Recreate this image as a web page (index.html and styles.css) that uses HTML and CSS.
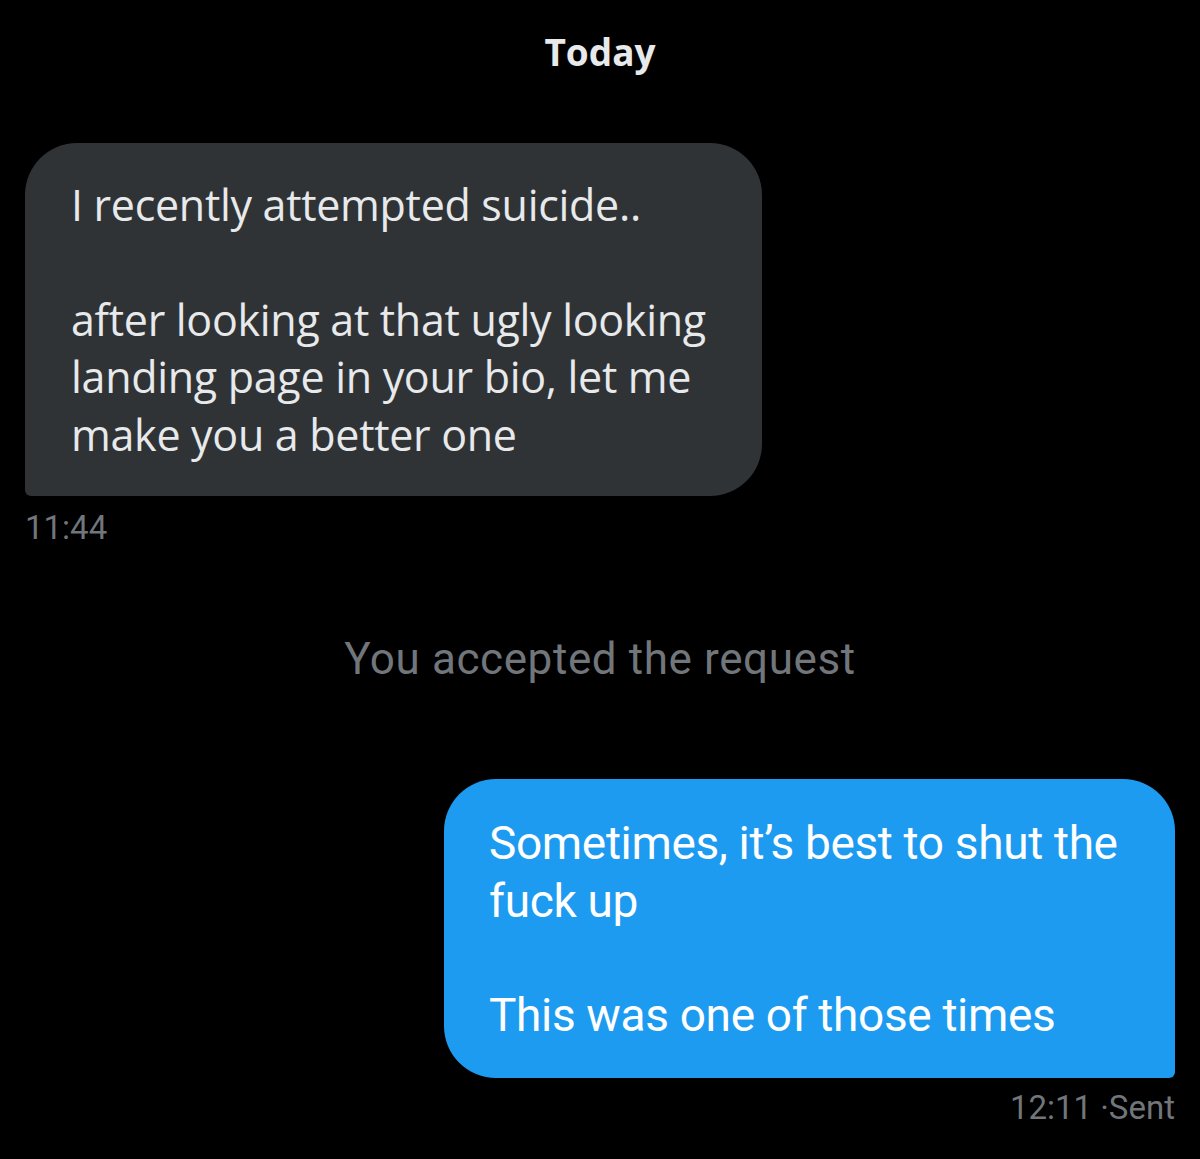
FILE: index.html
```html
<!DOCTYPE html>
<html>
<head>
<meta charset="utf-8">
<link rel="stylesheet" href="styles.css">
</head>
<body>
<div class="chat">
  <div class="day">Today</div>
  <div class="msg in">
    <div class="bubble gray">
      <p>I recently attempted suicide..</p>
      <p class="gap">after looking at that ugly looking landing page in your bio, let me make you a better one</p>
    </div>
    <div class="meta">11:44</div>
  </div>
  <div class="notice">You accepted the request</div>
  <div class="msg out">
    <div class="bubble blue">
      <p>Sometimes, it’s best to shut the fuck up</p>
      <p class="gap">This was one of those times</p>
    </div>
    <div class="meta right">12:11 ·Sent</div>
  </div>
</div>
</body>
</html>
```
FILE: styles.css
```css
html, body { margin: 0; padding: 0; background: #000; }
.chat { width: 1200px; height: 1159px; padding: 0 25px; box-sizing: border-box; display: flex; flex-direction: column; }
.day { text-align: center; font-family: "Open Sans", sans-serif; font-weight: 700; font-size: 37px; color: #e7e9ea; padding-top: 28px; line-height: 48px; }
.msg { display: flex; flex-direction: column; }
.msg.in { margin-top: 67px; align-items: flex-start; }
.msg.out { margin-top: 94px; align-items: flex-end; }
.bubble p { margin: 0; }
.bubble .gap { margin-top: 57px; }
.gray { background: #2f3336; color: #e7e9ea; font-family: "Open Sans", sans-serif; font-size: 43px; letter-spacing: -0.3px; line-height: 57.5px; width: 737px; box-sizing: border-box; padding: 33px 40px 33px 46px; border-radius: 52px 52px 52px 6px; }
.blue { background: #1d9bf0; color: #fff; font-family: "Roboto", sans-serif; font-size: 46px; letter-spacing: -0.35px; line-height: 57.5px; width: 731px; box-sizing: border-box; padding: 36px 40px 33px 45px; border-radius: 52px 52px 6px 52px; }
.meta { font-family: "Roboto", sans-serif; font-size: 33px; color: #71767b; margin-top: 12px; line-height: 40px; }
.meta.right { margin-top: 10px; }
.notice { text-align: center; font-family: "Roboto", sans-serif; font-size: 44px; letter-spacing: 0.6px; color: #71767b; margin-top: 85px; line-height: 52px; }
```
